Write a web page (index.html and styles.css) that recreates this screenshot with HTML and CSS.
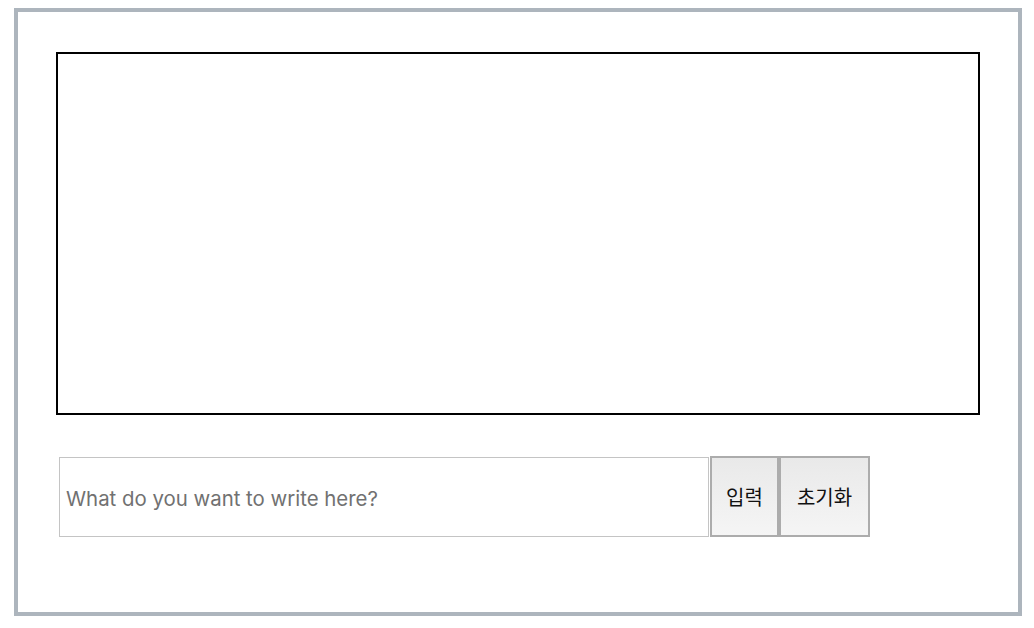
FILE: index.html
```html
<!DOCTYPE html>
<html lang="ko">
<head>
  <meta charset="UTF-8" />
  <title>Canvas Writer</title>
  <link rel="stylesheet" href="styles.css">
</head>
<body>
  <div class="frame">
    <div class="board"></div>
    <div class="input-row">
      <input type="text" class="text-input" placeholder="What do you want to write here?" />
      <button class="btn btn-write">입력</button>
      <button class="btn btn-reset">초기화</button>
    </div>
  </div>
</body>
</html>
```

FILE: styles.css
```css
body {
  margin: 8px 12px 0 14px;
  background: #fff;
  font-family: "Noto Sans", "Noto Sans CJK KR", sans-serif;
}
.frame {
  border: 4px solid #adb5bd;
  height: 608px;
  box-sizing: border-box;
  padding: 40px 38px 0 38px;
}
.board {
  border: 2px solid #000;
  height: 363px;
  box-sizing: border-box;
}
.input-row {
  display: flex;
  align-items: flex-start;
  margin-top: 41px;
  padding-left: 3px;
}
.text-input {
  width: 650px;
  height: 80px;
  margin-top: 1px;
  box-sizing: border-box;
  border: 1px solid #c4c4c4;
  padding: 2px 6px 0 6px;
  font-family: Inter, "Noto Sans", sans-serif;
  font-size: 20.4px;
  color: #333;
  outline: none;
}
.text-input::placeholder {
  color: #717171;
}
.btn {
  height: 81px;
  box-sizing: border-box;
  border: 2px solid #acacac;
  background: linear-gradient(#e9e9e9, #f5f5f5);
  font-family: "Noto Sans CJK KR", sans-serif;
  font-size: 20px;
  color: #111;
  padding: 0;
}
.btn-write {
  width: 69px;
  margin-left: 1px;
}
.btn-reset {
  width: 91px;
}
```
